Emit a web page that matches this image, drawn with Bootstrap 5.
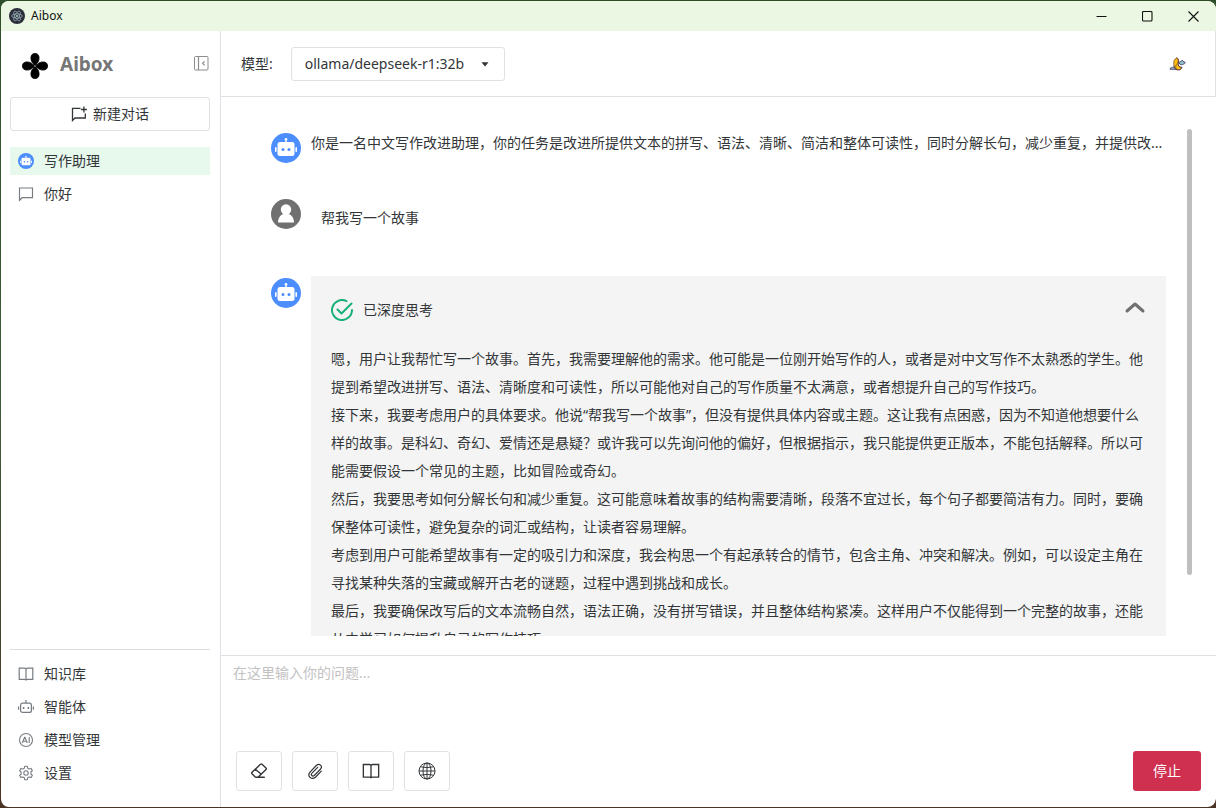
<!DOCTYPE html>
<html lang="zh-CN">
<head>
<meta charset="utf-8">
<meta name="viewport" content="width=device-width, initial-scale=1">
<title>Aibox</title>
<link href="https://cdn.jsdelivr.net/npm/bootstrap@5.3.0/dist/css/bootstrap.min.css" rel="stylesheet">
<style>
  :root { --line: #e0e0e6; --ink: #333639; --muted-icon: #767c82; }
  body {
    font-family: "Noto Sans", "Noto Sans CJK SC", sans-serif;
    font-size: 14px; line-height: 28px; color: var(--ink);
    background: linear-gradient(#2f4f2a, #3f5a3a 50%, #4a3324);
  }
  svg { flex: none; display: block; }
  .app-window { height: 100vh; border: 1px solid transparent; border-right: 0; background: #fff padding-box; border-radius: 9px; }
  .title-bar { height: 30px; background: #ebf7e3; color: #111; font-size: 12px; padding-left: 8px; gap: 6px; }
  .win-controls button { width: 46px; height: 30px; color: #111; }
  .plain-btn { border: 0; background: none; padding: 0; color: inherit; display: flex; align-items: center; justify-content: center; }
  .side-panel { width: 220px; border-right: 1px solid var(--line); padding: 0 10px 20px 9px; }
  .brand-row { height: 66px; padding-left: 12px; gap: 12px; }
  .brand-name { font-size: 19px; font-weight: 700; color: #767676; }
  .ctl { border: 1px solid var(--line); border-radius: 3px; background: #fff; color: var(--ink); }
  .new-chat { height: 34px; line-height: 20px; gap: 6px; }
  .side-link { height: 28px; padding-left: 8px; gap: 10px; color: var(--ink); text-decoration: none; }
  .side-link svg { color: var(--muted-icon); }
  .side-link.current { background: #e7f9ed; }
  .side-foot { border-top: 1px solid #dcdcdc; padding-top: 10px; }
  .stack5 { display: flex; flex-direction: column; gap: 5px; }
  .top-bar { height: 66px; border-bottom: 1px solid var(--line); border-right: 1px solid var(--line); padding: 0 28px 0 20px; gap: 18px; }
  .model-pick { appearance: none; height: 34px; width: 214px; padding: 0 13px; }
  .pick-caret { right: 16px; top: 15px; pointer-events: none; }
  .chat-pane { padding: 32px 24px 19px 50px; }
  .chat-scroll { overflow: hidden; padding-right: 26px; }
  .scroll-thumb { right: 0; top: 0; width: 5px; height: 88%; border-radius: 3px; background: #bfbfbf; }
  .turn { gap: 10px; }
  .turn-ask { margin: 36px 0 44px; }
  .turn-ask div { padding: 5px 10px 0; }
  .think-box { background: #f4f4f4; padding: 20px; }
  .think-head { height: 28px; margin-bottom: 21px; gap: 10px; }
  .compose { border-top: 1px solid var(--line); height: 152px; }
  .compose textarea { border: 0; outline: 0; resize: none; padding: 3px 12px; color: var(--ink); }
  .compose textarea::placeholder { color: #c2c2c2; opacity: 1; }
  .compose-bar { padding: 0 15px 16px; gap: 10px; }
  .tool-btn { width: 46px; height: 40px; display: flex; align-items: center; justify-content: center; padding: 0; }
  .stop-btn { width: 68px; height: 40px; background: #d03050; color: #fff; border: 0; border-radius: 3px; }
</style>
</head>
<body class="overflow-hidden">
<svg width="0" height="0" class="position-absolute" aria-hidden="true">
  <symbol id="bot-face" viewBox="0 0 30 30">
    <circle cx="15" cy="15" r="15" fill="#4c8dff"/>
    <g fill="#fff"><circle cx="15" cy="6.300" r="1.300"/><rect x="14.300" y="6" width="1.400" height="4"/>
    <rect x="6.500" y="9" width="17" height="14" rx="2.500"/><rect x="4" y="14" width="1.600" height="5" rx=".8"/><rect x="24.400" y="14" width="1.600" height="5" rx=".8"/></g>
    <circle cx="12" cy="16.500" r="1.500" fill="#4c8dff"/><circle cx="18" cy="16.500" r="1.500" fill="#4c8dff"/>
  </symbol>
  <symbol id="open-book" viewBox="0 0 16 16">
    <path d="M8 2.200v12.300M1.200 2.200H6.500Q8 2.200 8 3.200Q8 2.200 9.500 2.200h5.300v11.200H9.500Q8 13.400 8 14.300Q8 13.400 6.500 13.400H1.200z" fill="none" stroke="currentColor" stroke-width="1.200"/>
  </symbol>
</svg>

<div class="app-window d-flex flex-column overflow-hidden">
  <header class="title-bar d-flex align-items-center flex-shrink-0">
    <svg width="16" height="16" viewBox="0 0 16 16"><circle cx="8" cy="8" r="8" fill="#2b2e3a"/><g fill="none" stroke="#9fb6c0" stroke-width=".7"><ellipse cx="8" cy="8" rx="5.400" ry="2.200"/><ellipse cx="8" cy="8" rx="5.400" ry="2.200" transform="rotate(60 8 8)"/><ellipse cx="8" cy="8" rx="5.400" ry="2.200" transform="rotate(120 8 8)"/></g><circle cx="8" cy="8" r=".9" fill="#c5dbe2"/></svg>
    <span class="me-auto">Aibox</span>
    <div class="win-controls d-flex">
      <button class="plain-btn" aria-label="最小化"><svg width="11" height="11" viewBox="0 0 11 11"><path d="M.5 5.500h10" stroke="currentColor"/></svg></button>
      <button class="plain-btn" aria-label="最大化"><svg width="11" height="11" viewBox="0 0 11 11"><rect x=".5" y=".5" width="9.500" height="9.500" rx="1" fill="none" stroke="currentColor" stroke-width="1.100"/></svg></button>
      <button class="plain-btn" aria-label="关闭"><svg width="11" height="11" viewBox="0 0 11 11"><path d="M.5.500l10 10M10.500.500l-10 10" stroke="currentColor" stroke-width="1.100"/></svg></button>
    </div>
  </header>

  <div class="d-flex flex-grow-1 overflow-hidden">
    <aside class="side-panel d-flex flex-column flex-shrink-0">
      <div class="brand-row d-flex align-items-center">
        <svg width="26" height="26" viewBox="0 0 26 26" class="mt-1"><path stroke="#000" stroke-width=".8" stroke-linejoin="round" d="M13 12.200C10.500 10.500 8.900 8 8.900 5C8.900 2 10.500.400 13 .400s4.100 1.600 4.100 4.600C17.100 8 15.500 10.500 13 12.200zM13 13.800c2.500 1.700 4.100 4.200 4.100 7.200s-1.600 4.600-4.100 4.600-4.100-1.600-4.100-4.600c0-3 1.600-5.500 4.100-7.200zM12.200 13c-1.700 2.500-4.200 4.100-7.200 4.100S.4 15.500.4 13s1.600-4.100 4.600-4.100c3 0 5.500 1.600 7.200 4.100zM13.800 13c1.700-2.500 4.200-4.100 7.200-4.100s4.600 1.600 4.600 4.100-1.600 4.100-4.600 4.100c-3 0-5.500-1.600-7.200-4.100z"/><circle cx="13" cy="13" r="2.300"/><circle cx="13" cy="13" r=".7" fill="#fff"/></svg>
        <span class="brand-name me-auto">Aibox</span>
        <button class="plain-btn" aria-label="收起侧栏"><svg width="17" height="16" viewBox="0 0 17 16" fill="none" stroke="#8c8c8c"><rect x="1.500" y=".5" width="13.500" height="13.500" rx="1"/><path d="M5.500.500v13.500M11.600 5.300L9.600 7.300l2 2" stroke-width="1.200"/></svg></button>
      </div>
      <button class="ctl new-chat d-flex align-items-center justify-content-center mb-3 w-100 p-0">
        <svg width="16" height="16" viewBox="0 0 16 16" fill="none" stroke="currentColor" stroke-width="1.300"><path d="M9.500 2.400H1.500V14.500L4 12h10.300V7.500M12.900.500v6M9.900 3.500h6"/></svg><span>新建对话</span>
      </button>
      <nav class="stack5" aria-label="对话">
        <a href="#" class="side-link current d-flex align-items-center"><svg width="16" height="16"><use href="#bot-face"/></svg>写作助理</a>
        <a href="#" class="side-link d-flex align-items-center"><svg width="16" height="16" viewBox="0 0 16 16" fill="none" stroke="currentColor" stroke-width="1.200"><path d="M1.500 2h13v9.700H4.200L1.500 14.300z"/></svg>你好</a>
      </nav>
      <nav class="side-foot stack5 mt-auto" aria-label="工具">
        <a href="#" class="side-link d-flex align-items-center"><svg width="16" height="16"><use href="#open-book"/></svg>知识库</a>
        <a href="#" class="side-link d-flex align-items-center"><svg width="16" height="16" viewBox="0 0 16 16" fill="none" stroke="currentColor" stroke-width="1.200"><rect x="2.600" y="4.200" width="10.800" height="9.200" rx="2"/><path d="M8 1v3M.6 7.500v3.200M15.400 7.500v3.200"/><path d="M5.600 8v2M10.400 8v2" stroke-width="1.500"/></svg>智能体</a>
        <a href="#" class="side-link d-flex align-items-center"><svg width="16" height="16" viewBox="0 0 16 16" fill="none" stroke="currentColor" stroke-width="1.100"><circle cx="8" cy="8" r="6.500"/><path d="M4.300 11L6.600 5.200h.4L9.300 11M5.100 9.300h3.500M11.200 5v6"/></svg>模型管理</a>
        <a href="#" class="side-link d-flex align-items-center"><svg width="16" height="16" viewBox="0 0 16 16" fill="none" stroke="currentColor" stroke-width="1.100"><circle cx="8" cy="8" r="2.200"/><path d="M6.700 1.300h2.600l.4 1.900 1.500.9 1.900-.7 1.300 2.300-1.500 1.300v2l1.500 1.300-1.300 2.300-1.900-.7-1.500.9-.4 1.900H6.700l-.4-1.900-1.500-.9-1.900.7-1.300-2.300L3.100 9V7L1.600 5.700l1.300-2.300 1.900.7 1.500-.9z" stroke-linejoin="round"/></svg>设置</a>
      </nav>
    </aside>

    <main class="d-flex flex-column flex-grow-1 overflow-hidden">
      <div class="top-bar d-flex align-items-center flex-shrink-0">
        <label for="model">模型:</label>
        <div class="position-relative me-auto">
          <select id="model" class="ctl model-pick"><option>ollama/deepseek-r1:32b</option></select>
          <svg class="pick-caret position-absolute" width="8" height="5" viewBox="0 0 8 5"><path d="M.5.300h7L4 4.500z" fill="#333"/></svg>
        </div>
        <button class="plain-btn" aria-label="切换主题"><svg width="18" height="14" viewBox="0 0 18 14"><path d="M8 .8C9 3 7.500 5.500 6 7 4.500 9 5 11 7 12.400c2.500 1.200 5.300.4 6-2.100C10 10.300 8.800 8.500 9.300 6.300 9.700 4 9.500 2 8 .8z" fill="#ffbe0b" stroke="#4a2b45" stroke-width="1"/><path d="M8 .8C5 2 4.500 4.500 4.800 7c.3 3 1 4.600 2.800 5.400C5.900 10 7 8 8.500 6.500 9.600 4.600 9.400 2.400 8 .8z" fill="#ffbe0b" stroke="#4a2b45" stroke-width=".6"/><path d="M10 6.200c0-1.500 1.100-1.800 1.700-1.400.6-1.800 2.600-1.600 2.900 0 1.900-.2 2.300 1.600.2 2.100-1.300 1.300-3.600 1-4.800-.7zM1 12.300c0-1.600 1.500-1.700 2-1.500.6-1.300 2.600-.8 2.600.4.800 0 1.200.5 1 1.100z" fill="#8fc5cf" stroke="#4a3b5c" stroke-width=".9"/></svg></button>
      </div>

      <section class="chat-pane flex-grow-1 overflow-hidden">
        <div class="position-relative h-100">
          <div class="chat-scroll h-100">
            <div class="turn d-flex align-items-start">
              <svg width="30" height="30" class="mt-1"><use href="#bot-face"/></svg>
              <div class="text-nowrap overflow-hidden flex-grow-1">你是一名中文写作改进助理，你的任务是改进所提供文本的拼写、语法、清晰、简洁和整体可读性，同时分解长句，减少重复，并提供改...</div>
            </div>
            <div class="turn turn-ask d-flex align-items-start">
              <svg width="30" height="30" viewBox="0 0 30 30"><circle cx="15" cy="15" r="15" fill="#707070"/><circle cx="15" cy="10.500" r="5.200" fill="#fff"/><path d="M7 23.500c0-5 3-8 6-8.500h4c3 .5 6 3.500 6 8.500z" fill="#fff"/></svg>
              <div>帮我写一个故事</div>
            </div>
            <div class="turn d-flex align-items-start">
              <svg width="30" height="32" viewBox="0 0 30 32"><use href="#bot-face" y="2" width="30" height="30"/></svg>
              <article class="think-box flex-grow-1">
                <div class="think-head d-flex align-items-center">
                  <svg width="22" height="22" viewBox="0 0 22 22" fill="none" stroke="#18b079" stroke-width="2" stroke-linecap="round" stroke-linejoin="round"><path d="M15.500 2.100A10 10 0 1 0 21 11M6.500 10.500l4 4L20.500 4.500"/></svg>
                  <span class="me-auto">已深度思考</span>
                  <button class="plain-btn" aria-label="收起思考"><svg width="22" height="22" viewBox="0 0 22 22" fill="none" stroke="#707070" stroke-width="3" stroke-linecap="round" stroke-linejoin="round"><path d="M3 12l8-7 8 7"/></svg></button>
                </div>
                <p class="m-0">嗯，用户让我帮忙写一个故事。首先，我需要理解他的需求。他可能是一位刚开始写作的人，或者是对中文写作不太熟悉的学生。他提到希望改进拼写、语法、清晰度和可读性，所以可能他对自己的写作质量不太满意，或者想提升自己的写作技巧。</p>
                <p class="m-0">接下来，我要考虑用户的具体要求。他说“帮我写一个故事”，但没有提供具体内容或主题。这让我有点困惑，因为不知道他想要什么样的故事。是科幻、奇幻、爱情还是悬疑？或许我可以先询问他的偏好，但根据指示，我只能提供更正版本，不能包括解释。所以可能需要假设一个常见的主题，比如冒险或奇幻。</p>
                <p class="m-0">然后，我要思考如何分解长句和减少重复。这可能意味着故事的结构需要清晰，段落不宜过长，每个句子都要简洁有力。同时，要确保整体可读性，避免复杂的词汇或结构，让读者容易理解。</p>
                <p class="m-0">考虑到用户可能希望故事有一定的吸引力和深度，我会构思一个有起承转合的情节，包含主角、冲突和解决。例如，可以设定主角在寻找某种失落的宝藏或解开古老的谜题，过程中遇到挑战和成长。</p>
                <p class="m-0">最后，我要确保改写后的文本流畅自然，语法正确，没有拼写错误，并且整体结构紧凑。这样用户不仅能得到一个完整的故事，还能从中学习如何提升自己的写作技巧。</p>
              </article>
            </div>
          </div>
          <div class="scroll-thumb position-absolute"></div>
        </div>
      </section>

      <form class="compose d-flex flex-column flex-shrink-0">
        <textarea class="w-100 flex-grow-1" aria-label="问题" placeholder="在这里输入你的问题..."></textarea>
        <div class="compose-bar d-flex">
          <button type="button" class="ctl tool-btn" aria-label="清空"><svg width="18" height="18" viewBox="0 0 18 18" fill="none" stroke="currentColor" stroke-width="1.400" stroke-linejoin="round" stroke-linecap="round"><path d="M10.500 2.300L2 10.300Q1.300 11 2 11.700L5 14.700Q5.500 15.200 6.200 15.200H8L16 7.400Q16.800 6.700 16 6L12 2.300Q11.300 1.700 10.500 2.300zM5.300 7.300l6 5M7.500 15.200h6.800"/></svg></button>
          <button type="button" class="ctl tool-btn" aria-label="附件"><svg width="18" height="18" viewBox="0 0 18 18" fill="none" stroke="currentColor" stroke-width="1.200" stroke-linecap="round"><path d="M15.300 9.200L9.500 15.200C5.500 18.500.800 14 4 10.200L10.500 3.300C13.300.800 17 4 14.600 7L8.300 13.500C6.500 15 4.300 12.800 6 11.100L11.700 5.300"/></svg></button>
          <button type="button" class="ctl tool-btn" aria-label="知识库"><svg width="18" height="18"><use href="#open-book"/></svg></button>
          <button type="button" class="ctl tool-btn" aria-label="联网"><svg width="18" height="18" viewBox="0 0 18 18" fill="none" stroke="currentColor" stroke-width="1"><circle cx="9" cy="9" r="8"/><ellipse cx="9" cy="9" rx="4" ry="8"/><path d="M9 1v16M1 9h16M2.500 4.800Q9 6.500 15.500 4.800M2.500 13.200Q9 11.500 15.500 13.200"/></svg></button>
          <button type="button" class="stop-btn ms-auto">停止</button>
        </div>
      </form>
    </main>
  </div>
</div>
<script src="https://cdn.jsdelivr.net/npm/bootstrap@5.3.0/dist/js/bootstrap.bundle.min.js"></script>
</body>
</html>
